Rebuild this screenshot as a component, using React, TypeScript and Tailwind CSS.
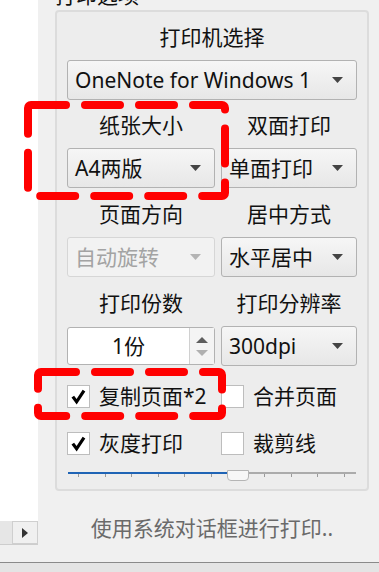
import React from "react";

const FONT = "font-['Noto_Sans','Noto_Sans_CJK_SC',sans-serif]";

function Arrow({ disabled }: { disabled?: boolean }) {
  return (
    <svg width="11" height="6" viewBox="0 0 11 6" className="shrink-0">
      <polygon points="0,0 11,0 5.5,6" fill={disabled ? "#b4b4b4" : "#444444"} />
    </svg>
  );
}

function Combo({ value, disabled }: { value: string; disabled?: boolean }) {
  return (
    <div
      className={`flex h-[40px] items-center justify-between rounded-[3px] border pl-[7px] pr-[13px] ${
        disabled
          ? "border-[#d6d6d6] bg-[#f2f2f2] text-[#a3a3a3]"
          : "border-[#b2b2b2] bg-linear-to-b from-[#f6f6f6] to-[#e7e7e7] text-[#111]"
      }`}
    >
      <span className="whitespace-nowrap leading-none">{value}</span>
      <Arrow disabled={disabled} />
    </div>
  );
}

function Label({ text }: { text: string }) {
  return <div className="h-[48px] pt-[11px] text-center leading-[28px]">{text}</div>;
}

function Check({ checked, label }: { checked?: boolean; label: string }) {
  return (
    <div className="flex items-center gap-[9px]">
      <div className="flex h-[23px] w-[23px] items-center justify-center border border-[#bdbdbd] bg-white">
        {checked ? (
          <svg width="17" height="17" viewBox="0 0 17 17">
            <path d="M2.8 8.6 L6.6 13.8 L14 2.6" fill="none" stroke="#000" strokeWidth="3.2" strokeLinejoin="miter" />
          </svg>
        ) : null}
      </div>
      <span className="leading-none">{label}</span>
    </div>
  );
}

function Slider() {
  const ticks = Array.from({ length: 11 }, (_, i) => 10 + i * 26.6);
  return (
    <div className="relative mx-[1px] h-[16px]">
      <div className="absolute left-0 top-[6px] h-[2px] w-[160px] bg-[#1f64b5]" />
      <div className="absolute left-[160px] right-0 top-[6px] h-[2px] bg-[#ababab]" />
      {ticks.map((x) => (
        <div key={x} className="absolute top-[8px] h-[3px] w-px bg-[#9a9a9a]" style={{ left: x }} />
      ))}
      <div className="absolute left-[159px] top-[4px] h-[11px] w-[22px] rounded-b-[4px] border border-[#b5b5b5] bg-[#f7f7f7]" />
    </div>
  );
}

export default function App() {
  return (
    <div className={`relative h-[572px] w-[379px] overflow-hidden bg-[#f0f0f0] text-[21px] text-[#111] ${FONT}`}>
      <div className="flex h-[562px]">
        <div className="flex w-[38px] flex-col">
          <div className="flex-1 bg-white" />
          <div className="flex h-[24px] border-b border-[#cdcdcd] bg-[#e6e6e6]">
            <div className="ml-auto flex w-[26px] items-center justify-center border border-[#cfcfcf] bg-[#f0f0f0]">
              <svg width="6" height="10" viewBox="0 0 6 10">
                <polygon points="0,0 6,5 0,10" fill="#333" />
              </svg>
            </div>
          </div>
          <div className="h-[17px]" />
        </div>

        <div className="flex-1 pl-[17px] pr-[10px]">
          <div className="-mt-[19px] h-[29px] leading-[28px]">打印选项</div>

          <div className="rounded-[4px] border-2 border-[#dcdcdc] bg-[#ededed] px-[10px] pb-[7px]">
            <Label text="打印机选择" />
            <Combo value="OneNote for Windows 1" />

            <div className="grid grid-cols-[148px_136px] gap-x-[6px]">
              <Label text="纸张大小" />
              <Label text="双面打印" />
              <Combo value="A4两版" />
              <Combo value="单面打印" />

              <div className="h-[49px] pt-[12px] text-center leading-[28px]">页面方向</div>
              <div className="h-[49px] pt-[12px] text-center leading-[28px]">居中方式</div>
              <Combo value="自动旋转" disabled />
              <Combo value="水平居中" />

              <div className="h-[49px] pt-[12px] text-center leading-[28px]">打印份数</div>
              <div className="h-[49px] pt-[12px] text-center leading-[28px]">打印分辨率</div>
              <div className="flex h-[38px] self-center rounded-[3px] border border-[#b2b2b2] bg-white">
                <div className="flex flex-1 items-center justify-center leading-none">1份</div>
                <div className="flex w-[25px] flex-col items-center justify-center gap-[7px] border-l border-[#d0d0d0] bg-[#f4f4f4]">
                  <svg width="12" height="6" viewBox="0 0 12 6">
                    <polygon points="0,6 12,6 6,0" fill="#5e5e5e" />
                  </svg>
                  <svg width="12" height="6" viewBox="0 0 12 6">
                    <polygon points="0,0 12,0 6,6" fill="#b0b0b0" />
                  </svg>
                </div>
              </div>
              <Combo value="300dpi" />

              <div className="mt-[19px]">
                <Check checked label="复制页面*2" />
              </div>
              <div className="mt-[19px]">
                <Check label="合并页面" />
              </div>
              <div className="mt-[24px]">
                <Check checked label="灰度打印" />
              </div>
              <div className="mt-[24px]">
                <Check label="裁剪线" />
              </div>
            </div>

            <div className="mt-[11px]">
              <Slider />
            </div>
          </div>

          <div className="mt-[23px] text-center leading-[28px] text-[#6a6a6a]">使用系统对话框进行打印..</div>
        </div>
      </div>
      <div className="h-px bg-[#8a8a8a]" />
      <div className="h-[9px] bg-[#e4e4e4]" />

      <svg className="pointer-events-none absolute left-0 top-0" width="379" height="572">
        <rect x="28" y="105" width="197" height="91" rx="3" fill="none" stroke="#ff0000" strokeWidth="8" strokeDasharray="35 19" strokeLinecap="round" />
        <rect x="38" y="372" width="184" height="44" rx="3" fill="none" stroke="#ff0000" strokeWidth="8" strokeDasharray="35 19" strokeLinecap="round" />
      </svg>
    </div>
  );
}
